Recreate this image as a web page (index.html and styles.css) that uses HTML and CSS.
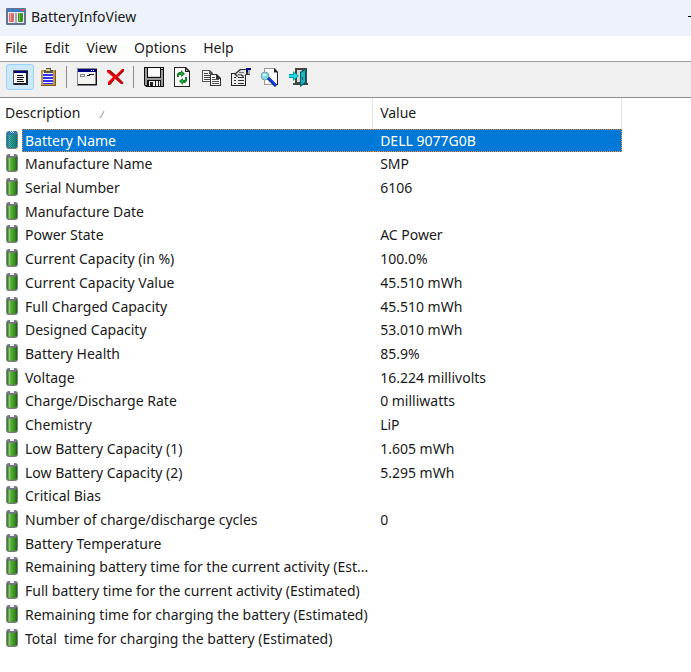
FILE: index.html
```html
<!DOCTYPE html>
<html lang="en">
<head>
<meta charset="utf-8">
<title>BatteryInfoView</title>
<link rel="stylesheet" href="styles.css">
</head>
<body>
<svg class="defs" aria-hidden="true">
  <defs>
    <linearGradient id="cell-green"><stop offset="0" stop-color="#2c6e20"/><stop offset=".25" stop-color="#8ac76c"/><stop offset=".4" stop-color="#55ac36"/><stop offset=".75" stop-color="#38921f"/><stop offset="1" stop-color="#1e5a14"/></linearGradient>
    <symbol id="battery" viewBox="0 0 12 20">
      <rect x="0" y="1" width="12" height="18" rx="3" fill="#7d8a84"/>
      <rect x="1" y="2" width="10" height="16" rx="2" fill="url(#cell-green)"/>
      <path d="M1 4q0-3 5-3t5 3q-5 2-10 0z" fill="#777583"/>
      <path d="M4 1h4v2H4z" fill="#eeeef5"/>
      <path d="M2 17q4 2 8 0v1q-4 2-8 0z" fill="#777"/>
    </symbol>
  </defs>
</svg>
<header class="titlebar">
  <svg class="app-icon" viewBox="0 0 20 17" aria-hidden="true">
    <rect width="20" height="17" rx="1" fill="#64748f"/><path fill="#3c7bc5" d="M1 1h18v3H1z"/><path fill="#e9edf2" d="M2 4h16v11H2z"/>
    <path fill="#d94d4d" d="M15 1h3v2h-3z"/>
    <rect x="3" y="5" width="5" height="9" rx="1" fill="#d66b70"/><path fill="#eda5a5" d="M4 5h1v8H4z"/><path fill="#a9a9ad" d="M9 5h2v10H9z"/>
    <rect x="12" y="5" width="5" height="9" rx="1" fill="#3c9422"/><path fill="#72bd59" d="M13 5h1v8h-1z"/>
  </svg>
  <h1>BatteryInfoView</h1>
  <button class="minimize" type="button" aria-label="Minimize"></button>
</header>
<nav class="menubar" aria-label="Menu">
  <button type="button">File</button><button type="button">Edit</button><button type="button">View</button><button type="button">Options</button><button type="button">Help</button>
</nav>
<div class="toolbar" role="toolbar" aria-label="Tools">
  <button type="button" class="active" aria-label="Show battery information"><svg viewBox="0 0 20 20"><path fill="#555" d="M3 3h15v15H3z"/><path fill="#222" d="M4 4h14v14H4z"/><path fill="#000080" d="M4 4h13v2H4z"/><path fill="#f7f7f7" d="M4 6h12v10H4z"/><path fill="#111" d="M7 8h6v1H7zM7 10h7v1H7zM7 12h6v1H7zM7 14h7v1H7z"/></svg></button>
  <button type="button" aria-label="Show battery log"><svg viewBox="0 0 20 20"><path fill="#7b5a24" d="M2 3h15v16H2z"/><path fill="#c39742" d="M2 3h14v15H2z"/><path fill="#f7f7ff" d="M4 5h10v12H4z"/><path fill="#555" d="M5 3h2V1h5v2h2v3H5z"/><path fill="#ddd35a" d="M7 2h4v2H7z"/><path fill="#3030ff" d="M4 7h10v2H4zM4 10h10v2H4zM4 13h10v2H4zM4 16h10v1H4z"/></svg></button>
  <span class="separator"></span>
  <button type="button" aria-label="Advanced options"><svg viewBox="0 0 20 20"><path fill="#888" d="M0 1h20v18H0z"/><path fill="#111" d="M1 18h19V2h-1v15H1z"/><path fill="#f3f3f0" d="M1 2h17v15H1z"/><path fill="#000080" d="M1 2h18v3H1z"/><path fill="#ddd" d="M14 3h1v1h-1zM16 3h1v1h-1z"/><path fill="#888" d="M3 7h5v1H3zM3 9h5v1H3zM3 7h1v3H3zM7 7h1v3H7z"/><path fill="#222" d="M10 8h2V7h5v1h-4v1h-3z"/></svg></button>
  <button type="button" aria-label="Delete"><svg viewBox="0 0 20 20"><path fill="#f00000" d="M1 3h3l6 5 6-6h2v2l-6 6 5 5v2h-2l-6-5-5 6H2v-3l5-5-6-5z"/><path fill="#8b1515" d="M4 3l5 5-1 1-4-4zM11 10l6 6v1l-7-6zM17 3l-5 5 1 1 5-5zM3 17l5-5v1l-4 5z"/></svg></button>
  <span class="separator"></span>
  <button type="button" aria-label="Save"><svg viewBox="0 0 20 20"><path fill="#111" d="M0 0h20v20H2l-2-2z"/><path fill="#999" d="M1 1h2v17H1zM17 3h2v16h-2z"/><path fill="#fafafa" d="M4 1h12v9H4z"/><path fill="#ccc" d="M4 9h12v1H4zM17 1h2v1h-2z"/><path fill="#999" d="M3 11h14v2H3z"/><path fill="#eee" d="M5 14h11v5H5z"/><path fill="#222" d="M6 15h3v4H6zM11 14h1v5h-1zM14 14h1v5h-1z"/></svg></button>
  <button type="button" aria-label="Refresh"><svg viewBox="0 0 20 20"><path fill="#222" d="M1 0h12l4 4v16H1z"/><path fill="#fbfbfb" d="M2 1h10v4h4v14H2z"/><path fill="#aaa" d="M13 2l2 2h-2z"/><path fill="#108426" d="M4 10V7l2-2h2V3l4 4-4 3V8H6v2zM14 10v4l-2 2h-2v2l-4-4 4-3v2h2v-3z"/><path fill="#2fc55b" d="M8 5l2 2-2 1zM8 14l2-1v3z"/></svg></button>
  <button type="button" aria-label="Copy"><svg viewBox="0 0 20 20"><path fill="#555" d="M0 3h8l3 3v9H0z"/><path fill="#f5f5f5" d="M1 4h6v3h3v7H1z"/><path fill="#444" d="M2 6h4v1H2zM2 8h6v1H2zM2 10h6v1H2zM2 12h6v1H2z"/><path fill="#333" d="M8 7h7l4 4v8H8z"/><path fill="#f5f5f5" d="M9 8h5v4h4v6H9z"/><path fill="#555" d="M10 10h3v1h-3zM10 12h7v1h-7zM10 14h7v1h-7zM10 16h7v1h-7z"/></svg></button>
  <button type="button" aria-label="Properties"><svg viewBox="0 0 20 20"><path fill="#222" d="M0 6h15v13H0z"/><path fill="#eee" d="M1 7h13v11H1z"/><path fill="#333" d="M3 10h2v1H3zM7 10h6v1H7zM3 13h2v1H3zM7 13h6v1H7zM3 16h2v1H3zM7 16h6v1H7z"/><path fill="#333" d="M3 7l6-5h6V1h4v7h-5l-2 2-3-2-3 2z"/><path fill="#e2e2dc" d="M5 7l5-4h5v4l-2 2-3-2-3 2z"/><path fill="#777" d="M8 5h5v1H8zM7 7h4v1H7z"/><path fill="#000080" d="M15 1h5v2h-3v2h-2z"/><path fill="#aaa" d="M17 3h2v4h-2z"/></svg></button>
  <button type="button" aria-label="Find"><svg viewBox="0 0 20 20"><path fill="#999" d="M4 1h11l3 4v13H4z"/><path fill="#fbfbfb" d="M5 2h9v4h3v11H5z"/><path fill="#222" d="M14 1l4 4h-4zM17 5h1v13h-4v-1h3z"/><circle cx="5" cy="9" r="4" fill="#7cdde4" stroke="#8a9c9e"/><path fill="#d9ffff" d="M3 7h3v2H3z"/><path stroke="#002080" stroke-width="3" d="M8 11l8 8"/><path stroke="#1245ff" stroke-width="2" d="M9 11l7 7"/></svg></button>
  <button type="button" aria-label="Exit"><svg viewBox="0 0 20 20"><path fill="#444" d="M6 1h12v15h1v2H4v-2h2z"/><path fill="#d8d8d8" d="M8 3h5v12H8z"/><path fill="#075e65" d="M11 5l6-4v15l-6 4z"/><path fill="#1fb4bd" d="M12 6l4-3v12l-4 3z"/><path fill="#174c50" d="M13 10h1v3h-1z"/><path fill="#0899a2" d="M0 7h4V4l6 5-6 5v-3H0z"/><path fill="#18dfe8" d="M0 8h5V6l4 3-4 3v-2H0z"/></svg></button>
</div>
<main class="list">
  <table>
    <colgroup><col class="description-col"><col class="value-col"></colgroup>
    <thead><tr><th scope="col">Description <svg class="sort" viewBox="0 0 8 8" aria-hidden="true"><path d="M1 7h2L6 1" fill="none" stroke="#999"/></svg></th><th scope="col">Value</th></tr></thead>
    <tbody>
      <tr class="selected"><td><div class="item"><svg class="cell-icon" viewBox="0 0 12 20"><use href="#battery"/><path d="M1.5 3v14M3.5 1v18M5.5 1v18M7.5 1v18M9.5 1v18" stroke="#0078d7" stroke-dasharray="1 1"/><path d="M.5 4v12M2.5 2v16M4.5 2v16M6.5 2v16M8.5 2v16M10.5 2v16" stroke="#0078d7" stroke-dasharray="1 1"/></svg><span>Battery Name</span></div></td><td>DELL 9077G0B</td></tr>
      <tr><td><div class="item"><svg class="cell-icon"><use href="#battery"/></svg><span>Manufacture Name</span></div></td><td>SMP</td></tr>
      <tr><td><div class="item"><svg class="cell-icon"><use href="#battery"/></svg><span>Serial Number</span></div></td><td>6106</td></tr>
      <tr><td><div class="item"><svg class="cell-icon"><use href="#battery"/></svg><span>Manufacture Date</span></div></td><td></td></tr>
      <tr><td><div class="item"><svg class="cell-icon"><use href="#battery"/></svg><span>Power State</span></div></td><td>AC Power</td></tr>
      <tr><td><div class="item"><svg class="cell-icon"><use href="#battery"/></svg><span>Current Capacity (in %)</span></div></td><td>100.0%</td></tr>
      <tr><td><div class="item"><svg class="cell-icon"><use href="#battery"/></svg><span>Current Capacity Value</span></div></td><td>45.510 mWh</td></tr>
      <tr><td><div class="item"><svg class="cell-icon"><use href="#battery"/></svg><span>Full Charged Capacity</span></div></td><td>45.510 mWh</td></tr>
      <tr><td><div class="item"><svg class="cell-icon"><use href="#battery"/></svg><span>Designed Capacity</span></div></td><td>53.010 mWh</td></tr>
      <tr><td><div class="item"><svg class="cell-icon"><use href="#battery"/></svg><span>Battery Health</span></div></td><td>85.9%</td></tr>
      <tr><td><div class="item"><svg class="cell-icon"><use href="#battery"/></svg><span>Voltage</span></div></td><td>16.224 millivolts</td></tr>
      <tr><td><div class="item"><svg class="cell-icon"><use href="#battery"/></svg><span>Charge/Discharge Rate</span></div></td><td>0 milliwatts</td></tr>
      <tr><td><div class="item"><svg class="cell-icon"><use href="#battery"/></svg><span>Chemistry</span></div></td><td>LiP</td></tr>
      <tr><td><div class="item"><svg class="cell-icon"><use href="#battery"/></svg><span>Low Battery Capacity (1)</span></div></td><td>1.605 mWh</td></tr>
      <tr><td><div class="item"><svg class="cell-icon"><use href="#battery"/></svg><span>Low Battery Capacity (2)</span></div></td><td>5.295 mWh</td></tr>
      <tr><td><div class="item"><svg class="cell-icon"><use href="#battery"/></svg><span>Critical Bias</span></div></td><td></td></tr>
      <tr><td><div class="item"><svg class="cell-icon"><use href="#battery"/></svg><span>Number of charge/discharge cycles</span></div></td><td>0</td></tr>
      <tr><td><div class="item"><svg class="cell-icon"><use href="#battery"/></svg><span>Battery Temperature</span></div></td><td></td></tr>
      <tr><td><div class="item"><svg class="cell-icon"><use href="#battery"/></svg><span>Remaining battery time for the current activity (Est...</span></div></td><td></td></tr>
      <tr><td><div class="item"><svg class="cell-icon"><use href="#battery"/></svg><span>Full battery time for the current activity (Estimated)</span></div></td><td></td></tr>
      <tr><td><div class="item"><svg class="cell-icon"><use href="#battery"/></svg><span>Remaining time for charging the battery (Estimated)</span></div></td><td></td></tr>
      <tr><td><div class="item"><svg class="cell-icon"><use href="#battery"/></svg><span>Total&nbsp; time for charging the battery (Estimated)</span></div></td><td></td></tr>
    </tbody>
  </table>
</main>
</body>
</html>
```
FILE: styles.css
```css
* { box-sizing: border-box; }

body {
  margin: 0;
  background: #fff;
  color: #1a1a1a;
  font: 14px/20px "Noto Sans", "Open Sans", sans-serif;
}

button {
  margin: 0;
  padding: 0;
  border: 0;
  background: none;
  color: inherit;
  font: inherit;
}

svg { display: block; flex: none; }
.defs { position: absolute; width: 0; height: 0; }

.titlebar {
  display: flex;
  align-items: center;
  height: 36px;
  padding: 0 0 4px 6px;
  gap: 5px;
  background: #eef3fb;
}
.titlebar h1 { margin: 0; padding-top: 2px; flex: 1; font-size: 14px; font-weight: 400; }
.app-icon { width: 20px; height: 17px; }
.minimize { width: 3px; height: 1px; background: #000; }

.menubar {
  display: flex;
  height: 25px;
  padding: 0 5px 2px;
  gap: 17px;
}

.toolbar {
  display: flex;
  align-items: center;
  height: 37px;
  padding: 0 6px 5px;
  gap: 1px;
  background: #f0f0f0;
  border-top: 1px solid #a0a0a0;
  border-bottom: 1px solid #8e8e8e;
}
.toolbar button {
  display: grid;
  place-items: center;
  width: 28px;
  height: 26px;
  border: 1px solid transparent;
  border-radius: 3px;
}
.toolbar .active { background: #cce8ff; border-color: #99d1ff; }
.toolbar svg { width: 20px; height: 20px; }
.separator { width: 1px; height: 22px; margin: 0 5px 0 2px; background: #8c8c8c; }

table {
  width: 90%;
  table-layout: fixed;
  border-collapse: separate;
  border-spacing: 0;
}
.description-col { width: 60%; }
th, td { padding: 0; text-align: left; white-space: nowrap; }
th {
  padding: 5px 0 6px 5px;
  font-weight: 400;
  border-right: 1px solid #e5e5e5;
}
th + th, td + td { padding-left: 7px; }
.sort { display: inline-block; width: 8px; height: 8px; margin-left: 14px; }

tbody tr { line-height: 24px; }
tbody tr:nth-child(7n + 1), tbody tr:nth-child(7n + 4) { line-height: 23px; }

.item { display: flex; align-items: flex-start; gap: 4px; padding-left: 6px; }
.cell-icon { width: 12px; height: 20px; margin-top: 1px; }
.item span { flex: 1; padding-left: 3px; }

tbody tr.selected { color: #fff; line-height: 21px; }
.selected span,
.selected td + td {
  background: #0078d7;
  border: 1px dotted #ff8728;
}
.selected span { padding-left: 2px; border-right: 0; }
.selected td + td { border-left: 0; }
```
